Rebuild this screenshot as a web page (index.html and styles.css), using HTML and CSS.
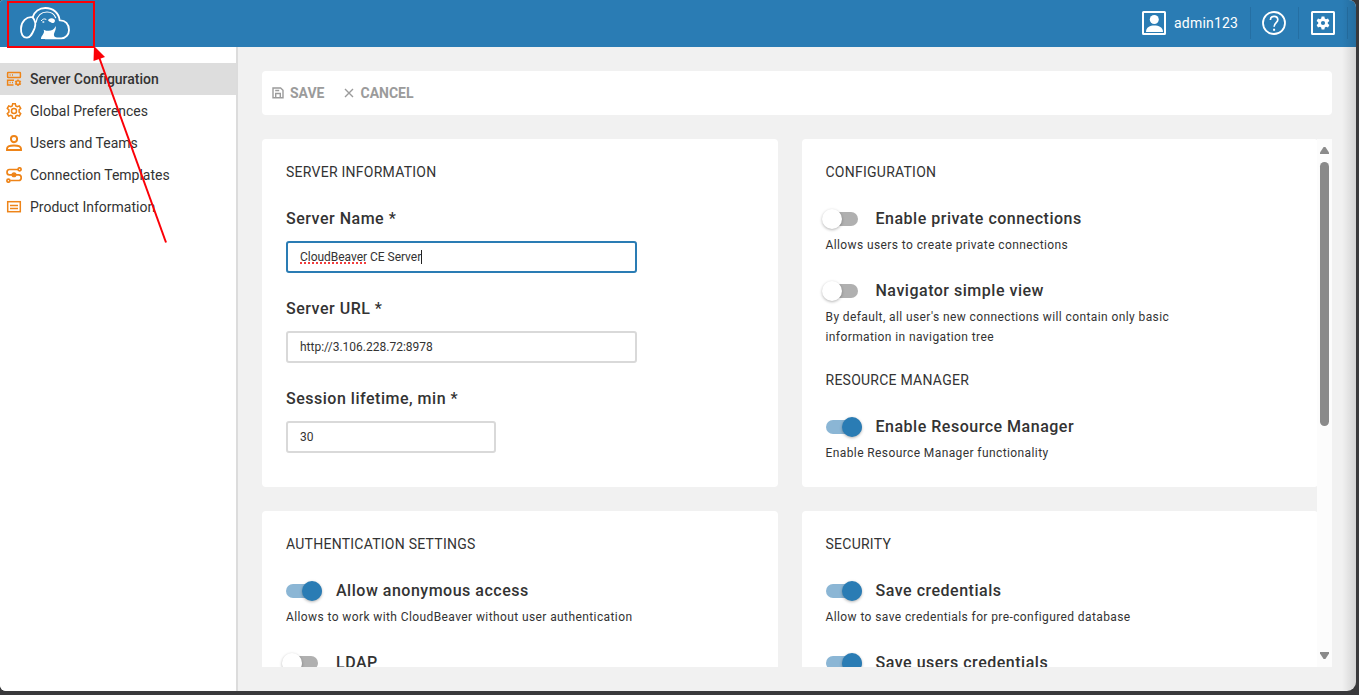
FILE: index.html
```html
<!DOCTYPE html>
<html lang="en">
<head>
<meta charset="utf-8">
<title>CloudBeaver</title>
<link rel="stylesheet" href="styles.css">
</head>
<body>
<div class="window">
  <header class="topbar">
    <svg class="logo" width="58" height="40" viewBox="0 0 174 120">
      <g fill="none" stroke="#fff" stroke-width="5.500" stroke-linecap="round" stroke-linejoin="round">
        <path d="M50 43C55 26 70 15 88 15C112 15 129 31 131 52C148 51 159 64 159 81C159 95 149 106 136 106H88"/>
        <path d="M50 43C31 40 16 56 15 76C14 93 21 105 33 104C45 103 50 89 56 75C60 63 56 50 50 43"/>
        <path d="M60 58C64 38 76 27 93 27C106 27 115 34 119 44" stroke-width="3.5"/>
        <path d="M76 53C80 48 85 46 90 49" stroke-width="3"/>
      </g>
      <path fill="#fff" d="M75 108C74 98 88 92 83 80C98 87 113 84 119 69C122 85 109 91 116 101L128 108Z"/>
      <path fill="#fff" d="M98 49C106 43 117 47 117 53C116 61 108 62 103 57C98 55 94 53 98 49Z"/>
      <ellipse fill="#fff" cx="82" cy="57" rx="3.5" ry="2.5"/>
    </svg>
    <div class="tools">
      <div class="tool user">
        <svg width="24" height="24" viewBox="0 0 24 24"><rect x="1" y="1" width="22" height="22" rx=".5" fill="none" stroke="#fff" stroke-width="2"/><circle cx="12.3" cy="8.5" r="4.5" fill="#fff"/><path d="M4 21C4 16 8 14.5 12.3 14.5S21 16 21 21Z" fill="#fff"/></svg>
        <span>admin123</span>
      </div>
      <div class="tool help">
        <svg width="24" height="24" viewBox="0 0 24 24" fill="none" stroke="#fff" stroke-width="1.8"><circle cx="12" cy="12" r="11"/><path d="M8.4 9C8.4 6.7 10 5.4 12.1 5.4S15.8 6.8 15.8 8.8C15.8 11.6 12.1 11.8 12.1 15.8" stroke-width="1.7"/><path d="M12.1 17.8v2" stroke-width="2"/></svg>
      </div>
      <div class="tool">
        <svg width="24" height="24" viewBox="0 0 24 24"><rect x="1" y="1" width="22" height="22" rx=".5" fill="none" stroke="#fff" stroke-width="2"/><g transform="translate(12 12)" fill="#fff"><path d="M-1.4-6.4H1.4L1.8-4.4L3-3.7L5-4.4L6.4-2L4.8-.7V.7L6.4 2L5 4.400L3 3.700L1.800 4.400L1.400 6.400H-1.400L-1.800 4.400L-3 3.700L-5 4.400L-6.400 2L-4.800 .7V-.7L-6.400-2L-5-4.400L-3-3.700L-1.800-4.400Z"/><circle r="2.1" fill="#2a7cb4"/></g></svg>
      </div>
    </div>
  </header>
  <div class="body">
    <nav class="sidebar">
      <div class="item active"><svg class="ico" viewBox="0 0 16 16"><rect x="1.600" y="1.600" width="12.800" height="5" rx=".5"/><path d="M7.500 14H1.600V9.200H8M3.600 4.100h1M6 4.100h1M3.600 11.600h1M6 11.600h1"/><circle cx="12" cy="11.700" r="1.900"/><path d="M12 8.400v1M12 14v1M9.200 10.100l.8.5M14.100 12.900l.8.5M14.900 10.100l-.8.5M10 12.900l-.8.5"/></svg><span>Server Configuration</span></div>
      <div class="item"><svg class="ico" viewBox="0 0 16 16"><path d="M6.700 .8h2.600l.5 2.100 1.400.8 2.100-.7 1.400 2.400-1.600 1.500v2.200l1.600 1.500-1.400 2.400-2.100-.7-1.400.8-.5 2.100H6.700l-.5-2.100-1.400-.8-2.100.7-1.400-2.400 1.600-1.500V6.900L1.300 5.400 2.700 3l2.100.7 1.400-.8z"/><circle cx="8" cy="8" r="2.500"/></svg><span>Global Preferences</span></div>
      <div class="item"><svg class="ico bold" viewBox="0 0 16 16"><circle cx="8" cy="4.100" r="3.100"/><path d="M1 15V13.800C1 11.400 4.700 10.500 8 10.500S15 11.400 15 13.800V15Z"/></svg><span>Users and Teams</span></div>
      <div class="item"><svg class="ico flow" viewBox="0 0 16 16"><circle cx="13.600" cy="2.300" r="1.500"/><circle cx="2.400" cy="13.700" r="1.500"/><path d="M12 2.500H3.400C.2 2.500.2 7.800 3.400 7.800H12.800C16 7.900 16 13.500 12.800 13.500H4.200"/><circle cx="8" cy="7.800" r="1.700" fill="#ee8418"/></svg><span>Connection Templates</span></div>
      <div class="item"><svg class="ico" viewBox="0 0 16 16"><rect x="1.700" y="2.700" width="12.600" height="10"/><path d="M4 6.500h8M4 9.500h8"/></svg><span>Product Information</span></div>
    </nav>
    <main class="main">
      <div class="actions">
        <div class="action"><svg width="12" height="12" viewBox="0 0 12 12" fill="none" stroke="#9b9b9b" stroke-width="1.4"><path d="M1 1H8.600L11 3.200V10.800H1ZM3.700 10.500V6.500H8.300V10.500M3.200 3.500H7.200"/></svg><span>SAVE</span></div>
        <div class="action cancel"><svg width="10" height="10" viewBox="0 0 10 10" stroke="#9b9b9b" stroke-width="1.4"><path d="M1 1L9 9M9 1L1 9"/></svg><span>CANCEL</span></div>
      </div>
      <div class="scroller">
        <div class="cards">
          <section class="card">
            <h2>SERVER INFORMATION</h2>
            <label class="field"><span class="label">Server Name *</span><span class="input focused"><span class="typo">CloudBeaver</span>&nbsp;CE Server<i class="caret"></i></span></label>
            <label class="field"><span class="label">Server URL *</span><span class="input">http://3.106.228.72:8978</span></label>
            <label class="field"><span class="label">Session lifetime, min *</span><span class="input short">30</span></label>
          </section>
          <section class="card">
            <h2>CONFIGURATION</h2>
            <div class="option"><div class="row"><i class="switch"></i><span class="label">Enable private connections</span></div><p>Allows users to create private connections</p></div>
            <div class="option"><div class="row"><i class="switch"></i><span class="label">Navigator simple view</span></div><p>By default, all user's new connections will contain only basic<br>information in navigation tree</p></div>
            <h2 class="next">RESOURCE MANAGER</h2>
            <div class="option"><div class="row"><i class="switch on"></i><span class="label">Enable Resource Manager</span></div><p>Enable Resource Manager functionality</p></div>
          </section>
          <section class="card">
            <h2>AUTHENTICATION SETTINGS</h2>
            <div class="option"><div class="row"><i class="switch on"></i><span class="label">Allow anonymous access</span></div><p>Allows to work with CloudBeaver without user authentication</p></div>
            <div class="option"><div class="row"><i class="switch"></i><span class="label">LDAP</span></div></div>
          </section>
          <section class="card">
            <h2>SECURITY</h2>
            <div class="option"><div class="row"><i class="switch on"></i><span class="label">Save credentials</span></div><p>Allow to save credentials for pre-configured database</p></div>
            <div class="option"><div class="row"><i class="switch on"></i><span class="label">Save users credentials</span></div></div>
          </section>
        </div>
        <div class="scrollbar"><i class="up"></i><i class="thumb"></i><i class="down"></i></div>
      </div>
    </main>
  </div>
  <div class="edge"></div>
</div>
<svg class="annotation" width="180" height="250" viewBox="0 0 180 250"><rect x="8" y="2" width="86" height="45" fill="none" stroke="#fb0007" stroke-width="2"/><path d="M99 57L166 242.500" stroke="#fb0007" stroke-width="2"/><path d="M94 46L105 57L93.500 61Z" fill="#fb0007"/></svg>
</body>
</html>
```
FILE: styles.css
```css
* { box-sizing: border-box; }
body { margin: 0; height: 695px; overflow: hidden; background: #39393b; font-family: Roboto, sans-serif; color: #333; }
.window { position: relative; display: flex; flex-direction: column; width: 1356px; height: 691px; border-radius: 3px 7px 9px 6px; overflow: hidden; background: #f1f1f1; }
.topbar { display: flex; align-items: center; justify-content: space-between; height: 47px; flex: none; padding: 0 8px 1px 16px; background: #2a7cb4; color: #fff; }
.logo { display: block; }
.tools { display: flex; align-items: center; }
.tool { display: flex; align-items: center; justify-content: center; width: 49px; height: 32px; border-right: 1px solid #256fa3; }
.tool.help { width: 48px; padding-right: 1px; }
.tool.user { width: 120px; padding-left: 11px; justify-content: flex-start; gap: 8px; font-size: 14px; letter-spacing: .2px; }
.tool svg { flex: none; }
.body { display: flex; flex: 1; min-height: 0; }
.sidebar { width: 238px; padding-top: 16px; background: #fff; border-right: 2px solid #dcdcdc; }
.item { display: flex; align-items: center; height: 32px; padding-left: 6px; gap: 8px; font-size: 14px; }
.item.active { background: #ddd; font-weight: 500; }
.ico { width: 16px; height: 16px; fill: none; stroke: #ee8418; stroke-width: 1.5; }
.ico.bold { stroke-width: 1.9; }
.ico.flow { stroke-width: 1.7; }
.main { display: flex; flex-direction: column; gap: 24px; width: 1094px; padding: 24px 0 24px 24px; }
.actions { display: flex; align-items: center; height: 44px; flex: none; padding-left: 10px; gap: 19px; background: #fff; border-radius: 4px; }
.action { display: flex; align-items: center; gap: 6px; font-size: 14px; font-weight: 700; color: #9b9b9b; }
.action.cancel { gap: 7px; }
.scroller { display: flex; flex: 1; min-height: 0; overflow: hidden; }
.cards { display: grid; grid-template-columns: 516px 516px; grid-template-rows: 348px 348px; gap: 24px; width: 1055px; flex: none; }
.card { padding: 24px; background: #fff; border-radius: 4px; }
.card:nth-child(even) { padding-left: 23.500px; }
h2 { margin: 0 0 28px; font-size: 14px; font-weight: 400; line-height: 18px; letter-spacing: .25px; }
h2.next { margin-top: -2px; }
.field { display: block; margin-bottom: 26px; }
.label { display: block; font-size: 16px; font-weight: 500; line-height: 20px; letter-spacing: .51px; }
.input { display: flex; align-items: center; width: 351px; height: 32px; margin-top: 12px; padding: 0 12px 1px; border: 2px solid #d9d9d9; border-radius: 3px; font-size: 12px; }
.input.short { width: 210px; }
.input.focused { border-color: #2a7cb4; letter-spacing: -.03px; }
.typo { text-decoration: underline dotted #f23c3c 1.5px; text-underline-offset: 2px; text-decoration-skip-ink: none; }
.caret { width: 1px; height: 14px; background: #222; }
.option { margin-bottom: 26px; }
.option:has(+ .next) { margin-bottom: 26px; }
.row { display: flex; align-items: center; gap: 14px; }
.switch { position: relative; width: 32px; height: 14px; margin-right: 4px; border-radius: 7px; background: #b0b0b0; }
.switch::after { content: ""; position: absolute; left: -4px; top: -3px; width: 20px; height: 20px; border-radius: 50%; background: #fff; box-shadow: 0 1px 3px rgba(0,0,0,.3); }
.switch.on { width: 36px; margin-right: 0; background: #8bb6d5; }
.switch.on::after { left: 16px; background: #2a7cb4; }
p { margin: 6px 0 0; font-size: 12px; line-height: 20px; letter-spacing: .4px; }
.scrollbar { display: flex; flex-direction: column; align-items: center; width: 15px; padding: 8px 0; background: #fcfcfc; }
.up, .down { width: 9px; height: 7px; background: #8a8a8a; clip-path: polygon(40% 0, 60% 0, 100% 80%, 100% 100%, 0 100%, 0 80%); }
.thumb { width: 9px; height: 264px; margin-top: 8px; background: #8a8a8a; border-radius: 5px; }
.down { margin-top: auto; clip-path: polygon(0 0, 100% 0, 100% 20%, 60% 100%, 40% 100%, 0 20%); }
.edge { position: absolute; right: 0; top: 0; width: 14px; height: 691px; background: linear-gradient(90deg, rgba(0,0,0,0), rgba(0,0,0,.12)); }
.annotation { position: absolute; left: 0; top: 0; }
```
